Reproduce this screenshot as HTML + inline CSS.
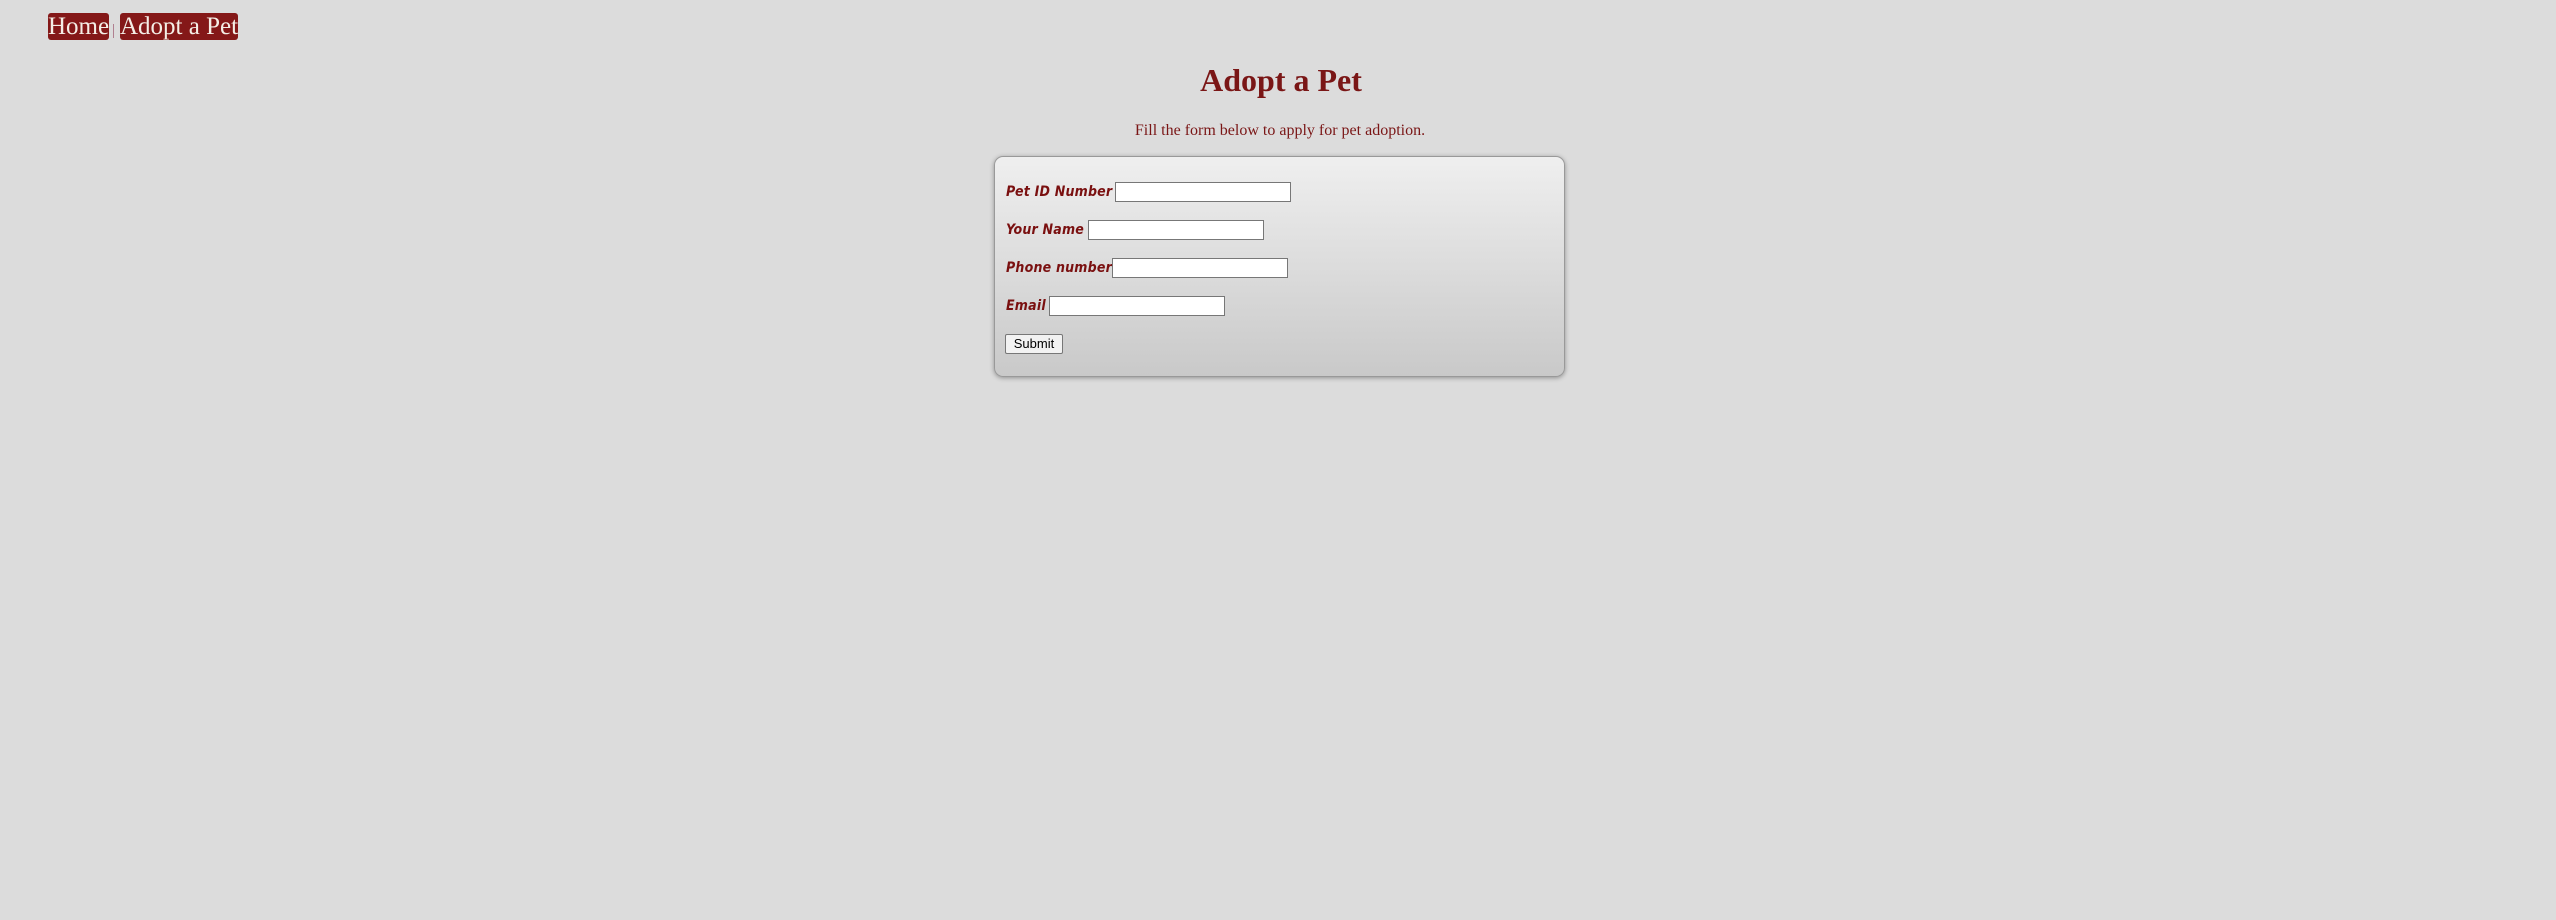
<!DOCTYPE html>
<html><head><meta charset="utf-8"><style>
html,body{margin:0;padding:0;width:2556px;height:920px;background:#dcdcdc;overflow:hidden;position:relative}
.nav{position:absolute;top:13px;height:27px;background:#841818;color:#f4eee6;border-radius:3px;font:25px/28px "Liberation Serif",serif;white-space:nowrap;text-align:center;overflow:hidden}
.sep{position:absolute;left:113px;top:24px;width:1px;height:14px;background:#b08090}
h1{position:absolute;left:0;width:2562px;top:60px;margin:0;text-align:center;font:bold 32px/40px "Liberation Serif",serif;color:#7a1616}
.sub{position:absolute;left:0;width:2560px;top:121px;text-align:center;font:16px/20px "Liberation Serif",serif;color:#7a1616}
.box{position:absolute;left:994px;top:156px;width:569px;height:219px;border:1px solid #999;border-radius:9px;background:linear-gradient(#efefef,#c9c9c9);box-shadow:0 1px 5px rgba(0,0,0,.35)}
.lbl{position:absolute;left:1006px;font:italic bold 14px/16px "DejaVu Sans Condensed","DejaVu Sans",sans-serif;font-stretch:condensed;letter-spacing:0.2px;color:#7a1010;white-space:nowrap}
.in{position:absolute;height:18px;width:174px;border:1px solid #777;background:#fff}
.btn{position:absolute;left:1005px;top:334px;width:56px;height:18px;border:1px solid #777;background:#f2f2f2;font:13px/18px "Liberation Sans",sans-serif;text-align:center;color:#000;border-radius:2px}
</style></head><body>
<div class="nav" style="left:48px;width:61px;">Home</div>
<div class="sep"></div>
<div class="nav" style="left:120px;width:118px;">Adopt a Pet</div>
<h1>Adopt a Pet</h1>
<div class="sub">Fill the form below to apply for pet adoption.</div>
<div class="box"></div>
<div class="lbl" style="top:184px">Pet ID Number</div><div class="in" style="left:1115px;top:182px"></div>
<div class="lbl" style="top:222px">Your Name</div><div class="in" style="left:1088px;top:220px"></div>
<div class="lbl" style="top:260px">Phone number</div><div class="in" style="left:1112px;top:258px"></div>
<div class="lbl" style="top:298px">Email</div><div class="in" style="left:1049px;top:296px"></div>
<div class="btn">Submit</div>
</body></html>
